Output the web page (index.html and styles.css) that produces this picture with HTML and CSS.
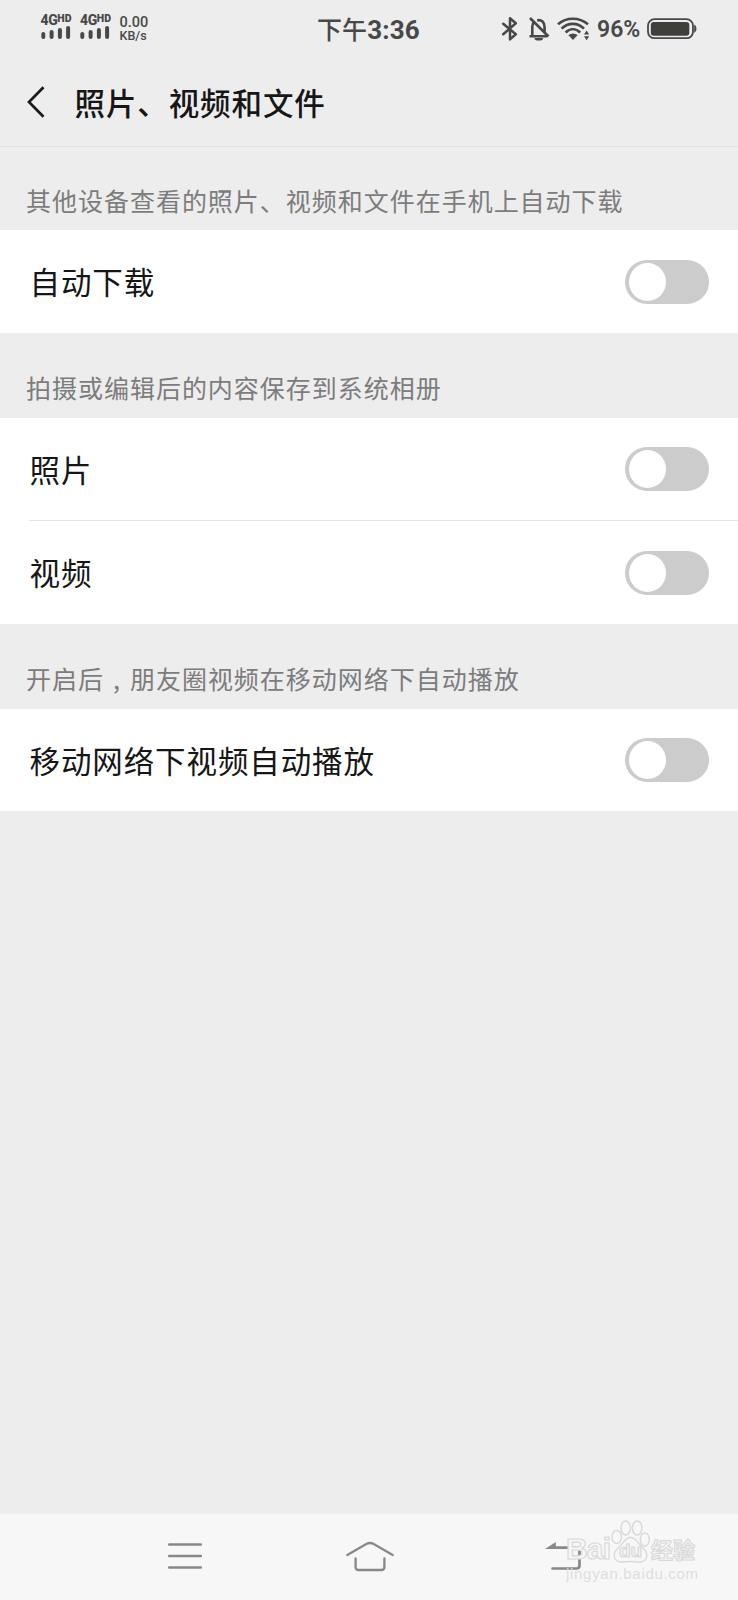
FILE: index.html
```html
<!DOCTYPE html>
<html lang="zh-CN">
<head>
<meta charset="utf-8">
<title>照片、视频和文件</title>
<link rel="stylesheet" href="styles.css">
</head>
<body>
<div class="screen">
  <header class="status">
    <div class="status-left">
      <div class="sim">
        <div class="net">4G<span class="hd">HD</span></div>
        <svg width="30" height="14" viewBox="0 0 30 14" stroke="#484848" stroke-width="4" stroke-linecap="round"><path d="M2.300 9v3M10.600 7v5M18.900 5v7M27.100 3v9"/></svg>
      </div>
      <div class="sim">
        <div class="net">4G<span class="hd">HD</span></div>
        <svg width="30" height="14" viewBox="0 0 30 14" stroke="#484848" stroke-width="4" stroke-linecap="round"><path d="M2.300 9v3M10.600 7v5M18.900 5v7M27.100 3v9"/></svg>
      </div>
      <div class="speed"><span class="rate">0.00</span><span class="unit">KB/s</span></div>
    </div>
    <div class="clock"><span class="ampm">下午</span>3:36</div>
    <div class="status-right">
      <svg class="bt" width="18" height="26" viewBox="0 0 18 26" fill="none" stroke="#484848" stroke-width="2.500" stroke-linejoin="round" stroke-linecap="round"><path d="M2.200 7.700L14.800 18.300L9 23.400V2.200L14.800 7.300L2.200 18.200"/></svg>
      <svg class="bell" width="22" height="26" viewBox="0 0 22 26" fill="none" stroke="#484848" stroke-width="2.600"><path d="M1.500 20.300H19M4.300 20V11C4.300 8.500 5 6.900 6.200 5.700M9.200 4.400C13.500 3.300 16.600 6.200 16.600 11V16.500M2 2L20.500 20.500"/><path d="M6.500 22h8.600a4.300 2.600 0 0 1-8.600 0z" fill="#484848" stroke="none"/></svg>
      <svg class="wifi" width="33" height="26" viewBox="0 0 33 26" fill="none" stroke="#484848" stroke-width="2.700"><path d="M1 8.300C9.500 .9 22 .9 31 8.300M4.600 12.600C11 6.300 20.600 6.300 27 12.600M8.600 16.400C13 12.200 18.700 12.200 23.200 16.400"/><path d="M11.300 19.100Q16 15.700 20.700 19.100L16 24z" fill="#484848" stroke="none"/><path d="M27 18.500l2.600-4 2.600 4zM27 20.300h5.200l-2.600 4z" fill="#484848" stroke="none"/></svg>
      <span class="percent">96%</span>
      <svg class="battery" width="50" height="22" viewBox="0 0 50 22"><rect x="1" y="1.200" width="45" height="19" rx="6.500" fill="none" stroke="#484848" stroke-width="1.800"/><rect x="3.800" y="4" width="38.500" height="13.700" rx="3" fill="#3f403b"/><path d="M47.200 6.500q2.300 1 2.300 4.300t-2.300 4.300z" fill="#484848"/></svg>
    </div>
  </header>
  <div class="titlebar">
    <svg class="back" width="20" height="34" viewBox="0 0 20 34" fill="none" stroke="#1a1a1a" stroke-width="2.700"><path d="M17.500 2.300L3 17L17.500 31.700"/></svg>
    <h1 class="title">照片、视频和文件</h1>
  </div>
  <main class="settings">
    <p class="caption first">其他设备查看的照片、视频和文件在手机上自动下载</p>
    <div class="group">
      <div class="row"><span class="label">自动下载</span><span class="switch"></span></div>
    </div>
    <p class="caption">拍摄或编辑后的内容保存到系统相册</p>
    <div class="group">
      <div class="row"><span class="label">照片</span><span class="switch"></span></div>
      <div class="divider"></div>
      <div class="row"><span class="label">视频</span><span class="switch"></span></div>
    </div>
    <p class="caption">开启后<span class="comma">,</span>朋友圈视频在移动网络下自动播放</p>
    <div class="group">
      <div class="row"><span class="label">移动网络下视频自动播放</span><span class="switch"></span></div>
    </div>
  </main>
  <nav class="navbar">
    <svg class="menu" width="36" height="30" viewBox="0 0 36 30" stroke="#888" stroke-width="2.500" stroke-linecap="round"><path d="M2.200 3.400h31.600M2.200 15h31.600M2.200 26.600h31.600"/></svg>
    <svg class="home" width="50" height="32" viewBox="0 0 50 32" fill="none" stroke="#888" stroke-width="2.300" stroke-linecap="round"><path d="M2.300 15L21.300 4Q25 2 28.700 4L47.700 15M10.600 18.500V27Q10.600 30 13.600 30H36.400Q39.400 30 39.400 27V18.500"/></svg>
    <svg class="return" width="37" height="30" viewBox="0 0 37 30" fill="none" stroke="#888" stroke-width="2.700" stroke-linecap="round"><path d="M8 6.600H31.500Q34.500 6.600 34.500 9.600V24.500Q34.500 27.500 31.500 27.500H7.500"/><path d="M0 7.900L10.800 .9V7.900z" fill="#888" stroke="none"/></svg>
    <div class="watermark">
      <div class="brand">
        <span class="bai">Bai</span>
        <span class="paw">
          <svg width="40" height="44" viewBox="0 0 42 44" preserveAspectRatio="none" fill="#f7f7f7" stroke="#d9d9d9" stroke-width="1.500"><ellipse cx="6" cy="17" rx="5" ry="6.500"/><ellipse cx="15.500" cy="8" rx="5" ry="7"/><ellipse cx="27.500" cy="8" rx="5" ry="7"/><ellipse cx="35.500" cy="19.500" rx="4.800" ry="6.500"/><path d="M20.500 17.500C15 17.500 13 23 9 26.500C4 31 2 34 4 38.500C7 44 14 41.500 20.500 41.500S34 44 37 38.500C39 34 37 31 32 26.500C28 23 26 17.500 20.500 17.500z"/></svg>
          <span class="du">du</span>
        </span>
        <span class="jy">经验</span>
      </div>
      <div class="site">jingyan.baidu.com</div>
    </div>
  </nav>
</div>
</body>
</html>
```
FILE: styles.css
```css
* { box-sizing: border-box; }
body { margin: 0; background: #ededed; font-family: Roboto, "Noto Sans CJK SC", sans-serif; }
svg { display: block; flex: none; }
.screen { width: 738px; height: 1600px; display: flex; flex-direction: column; background: #ededed; overflow: hidden; }
.status { height: 60px; display: grid; grid-template-columns: 317px 183px 1fr; color: #484848; }
.status-left { display: flex; padding: 14px 0 0 40.500px; }
.sim { width: 39.500px; }
.net { height: 11px; font-size: 14px; line-height: 13px; font-weight: 800; white-space: nowrap; letter-spacing: -.4px; }
.hd { font-size: 10.500px; position: relative; top: -3px; letter-spacing: .1px; font-weight: 900; }
.speed { display: flex; flex-direction: column; font-weight: 500; }
.rate { font-size: 14.500px; line-height: 17px; }
.unit { font-size: 12.500px; line-height: 10px; }
.clock { font-size: 26px; line-height: 60px; font-weight: 700; letter-spacing: .1px; white-space: nowrap; }
.ampm { font-size: 25px; font-weight: 500; }
.status-right { display: flex; align-items: center; height: 57px; }
.bt { margin-left: 1px; }
.bell { margin-left: 8.500px; }
.wifi { margin-left: 7px; }
.percent { margin: 3px 0 0 7.500px; width: 50px; font-size: 23px; font-weight: 600; line-height: 30px; }
.titlebar { height: 87px; display: flex; align-items: center; padding: 0 0 1px 26px; border-bottom: 1px solid #e1e1e1; }
.back { margin-bottom: 1px; }
.title { margin: 0 0 2px 28.500px; font: 500 30.500px/44px "Noto Sans CJK SC", sans-serif; letter-spacing: .9px; color: #161616; }
.settings { flex: 1; font-family: "Noto Sans CJK SC", sans-serif; }
.caption { margin: 0; height: 85px; padding: 36.500px 0 0 26px; font-size: 25px; line-height: 36px; letter-spacing: .98px; color: #7c7c7c; font-weight: 400; white-space: nowrap; }
.caption.first { height: 83px; padding-top: 35px; }
.comma { display: inline-block; width: 26px; padding-left: 9px; }
.group { background: #fff; }
.row { height: 102.500px; display: flex; align-items: center; justify-content: space-between; padding: 0 29px 0 29.500px; }
.label { font-size: 30.500px; line-height: 44px; letter-spacing: .9px; color: #161616; }
.switch { width: 84px; height: 44px; margin-top: 1px; border-radius: 22px; background: #ccc; padding: 3px 4px; }
.switch::before { content: ""; display: block; width: 37px; height: 38px; border-radius: 50%; background: #fff; }
.divider { height: 1px; margin-left: 29px; background: #e5e5e5; }
.navbar { height: 86px; background: #f7f7f7; display: flex; align-items: center; padding-bottom: 2px; position: relative; }
.menu { margin-left: 167px; }
.home { margin-left: 141.500px; }
.return { margin-left: 150px; }
.watermark { position: absolute; left: 566px; top: 6px; color: #f7f7f7; }
.brand { display: flex; align-items: flex-end; height: 44px; -webkit-text-stroke: 1.200px #d9d9d9; }
.bai { width: 45px; font: 700 30px/30px "Liberation Sans", sans-serif; letter-spacing: -.8px; }
.paw { position: relative; width: 40px; height: 44px; }
.du { position: absolute; left: 8px; top: 20px; font: 700 19px/22px "Liberation Sans", sans-serif; }
.jy { font: 700 22px/32px "Noto Sans CJK SC", sans-serif; }
.site { font: 15px/20px "Liberation Sans", sans-serif; color: #dedede; letter-spacing: .7px; }
```
